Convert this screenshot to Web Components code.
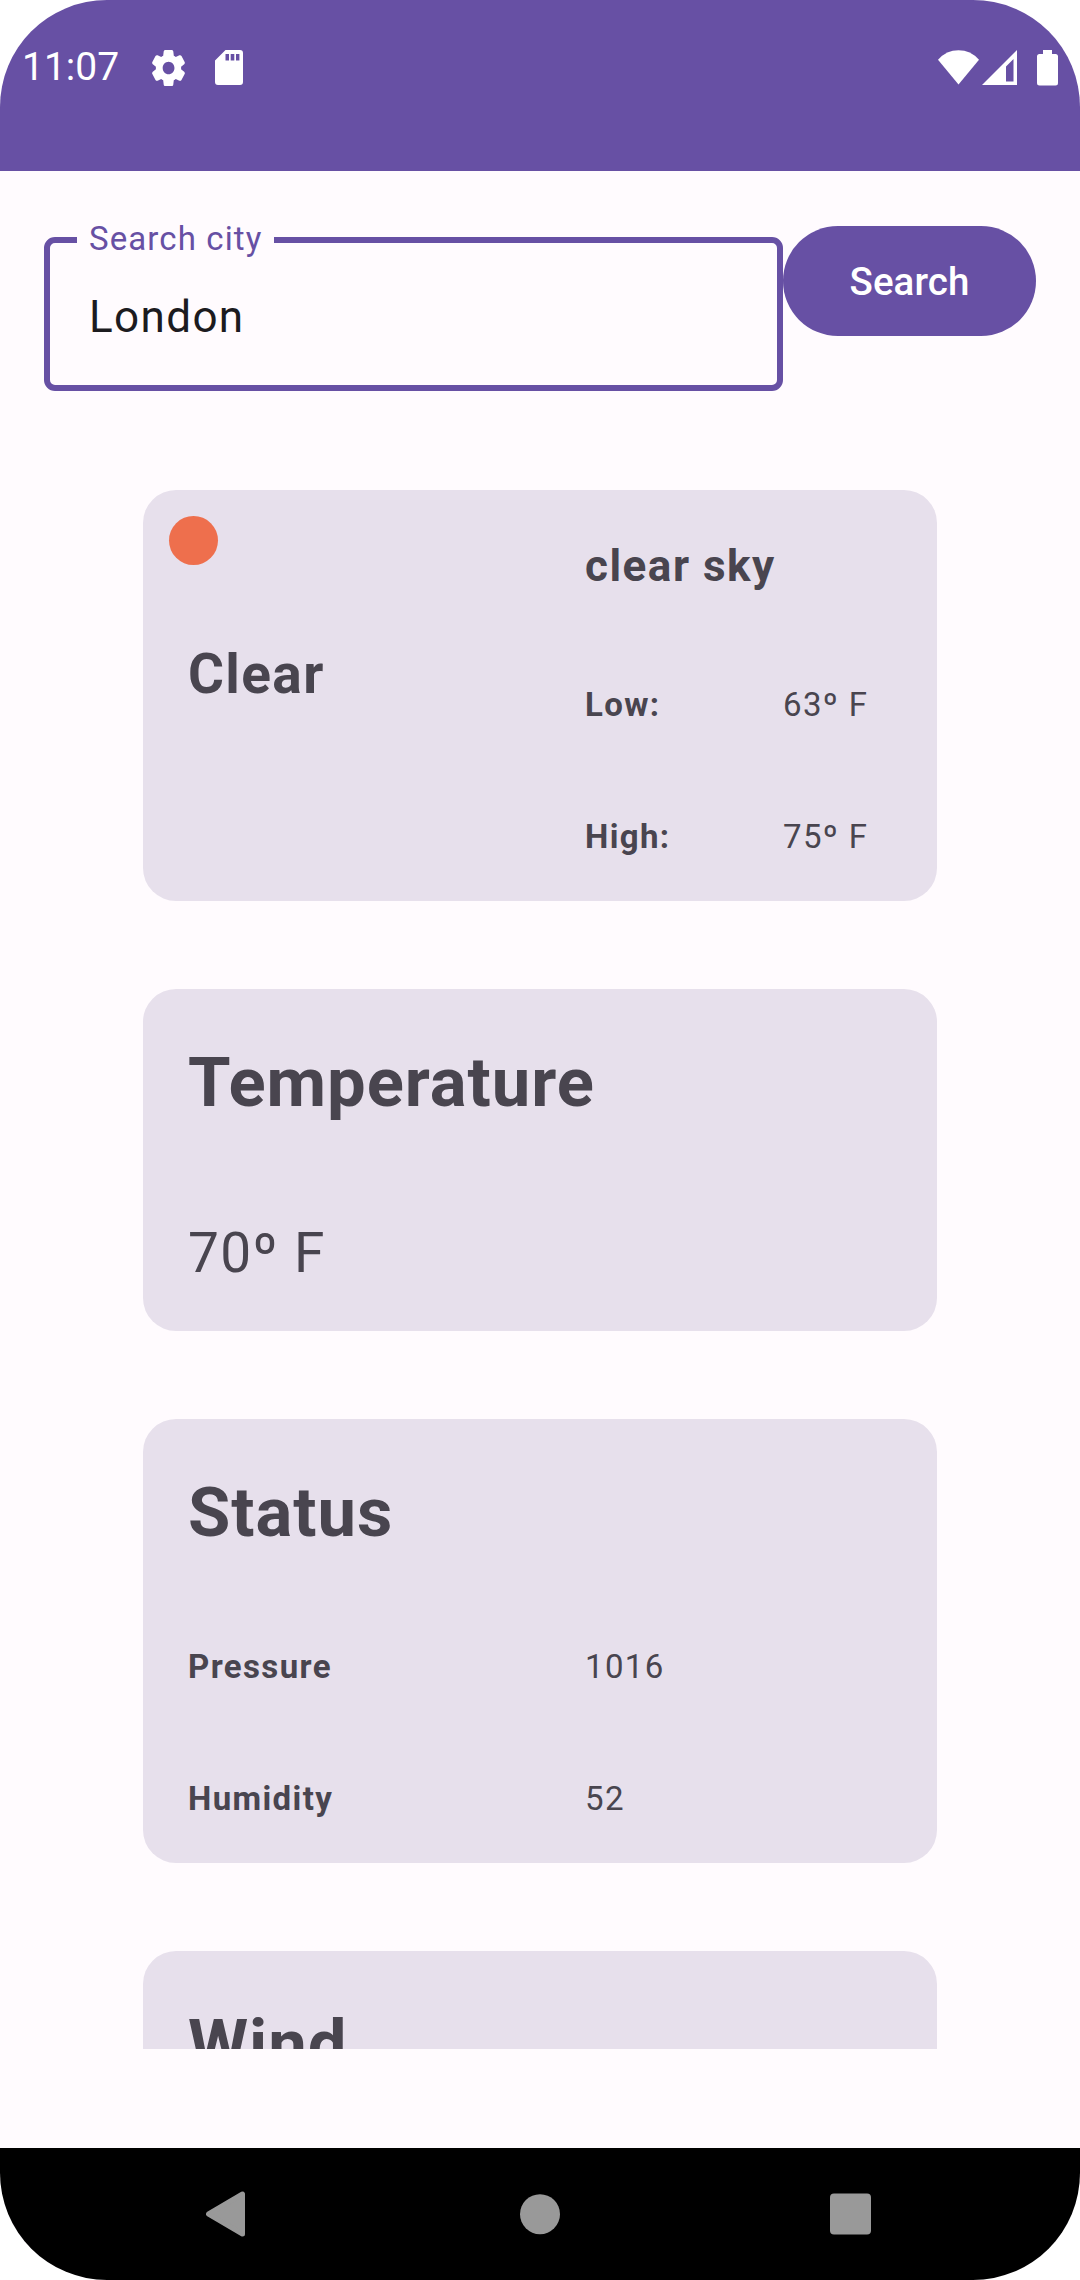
<!DOCTYPE html>
<html lang="en">
<head>
<meta charset="utf-8">
<title>Weather</title>
<style>
html, body { margin: 0; background: #fff; }
body { font-family: Roboto, "Noto Sans", sans-serif; }
</style>
</head>
<body>
<weather-screen>
  <status-bar slot="status">11:07</status-bar>
  <search-row slot="content" label="Search city" action="Search">London</search-row>
  <card-list slot="content">
    <summary-card>
      <text-line size="55" bold slot="main">Clear</text-line>
      <text-line size="44" bold slot="detail" style="letter-spacing:1.5px">clear sky</text-line>
      <value-row slot="detail" split="198"><b slot="name">Low:</b>63º F</value-row>
      <value-row slot="detail" split="198"><b slot="name">High:</b>75º F</value-row>
    </summary-card>
    <info-card style="--h:342px">
      <text-line size="68.75" bold style="letter-spacing:.95px">Temperature</text-line>
      <text-line size="55" style="margin-top:104px">70º F</text-line>
    </info-card>
    <info-card style="--h:444px">
      <text-line size="68.75" bold style="letter-spacing:.95px">Status</text-line>
      <value-row split="397" style="margin-top:88px"><b slot="name">Pressure</b>1016</value-row>
      <value-row split="397" style="margin-top:66px"><b slot="name">Humidity</b>52</value-row>
    </info-card>
    <info-card style="--h:444px">
      <text-line size="68.75" bold style="letter-spacing:.95px">Wind</text-line>
    </info-card>
  </card-list>
  <nav-bar slot="nav"></nav-bar>
</weather-screen>
<script>
const define = (name, html, init) => customElements.define(name, class extends HTMLElement {
  constructor() {
    super();
    this.attachShadow({ mode: 'open' }).innerHTML = html;
  }
  connectedCallback() { if (init) init(this, this.shadowRoot); }
});

define('weather-screen', `
<style>
:host { display: flex; flex-direction: column; width: 1080px; height: 2280px; overflow: hidden;
  border-radius: 107px; background: #fffbfe; color: #49454f; }
header { flex: none; height: 171px; background: #6750a4; }
main { flex: none; height: 1878px; overflow: hidden; display: flex; flex-direction: column; }
footer { margin-top: auto; height: 132px; background: #000; }
</style>
<header><slot name="status"></slot></header>
<main><slot name="content"></slot></main>
<footer><slot name="nav"></slot></footer>`);

define('status-bar', `
<style>
:host { display: flex; justify-content: space-between; height: 135px; color: #fff;
  font-size: 39px; line-height: 135px; padding: 0 22px; box-sizing: border-box; }
div { display: flex; align-items: center; }
.time { width: 130px; }
svg { display: block; fill: #fff; }
</style>
<div>
  <span class="time"><slot></slot></span>
  <svg width="33" height="36" viewBox="2.2 2 19.6 20" preserveAspectRatio="none"><path d="M19.5 12c0-.23-.01-.45-.03-.68l1.86-1.41c.4-.3.51-.86.26-1.3l-1.87-3.23c-.25-.44-.79-.62-1.25-.42l-2.15.91c-.37-.26-.76-.49-1.17-.68l-.29-2.31c-.06-.5-.49-.88-.99-.88h-3.73c-.51 0-.94.38-1 .88l-.29 2.31c-.41.19-.8.42-1.17.68l-2.15-.91c-.46-.2-1-.02-1.25.42L2.41 8.62c-.25.44-.14.99.26 1.3l1.86 1.41C4.51 11.55 4.5 11.77 4.5 12s.01.45.03.68l-1.86 1.41c-.4.3-.51.86-.26 1.3l1.87 3.23c.25.44.79.62 1.25.42l2.15-.91c.37.26.76.49 1.17.68l.29 2.31c.06.5.49.88.99.88h3.73c.5 0 .93-.38.99-.88l.29-2.31c.41-.19.8-.42 1.17-.68l2.15.91c.46.2 1 .02 1.25-.42l1.87-3.23c.25-.44.14-.99-.26-1.3l-1.86-1.41c.03-.23.04-.45.04-.68zM12.04 15.5c-1.93 0-3.5-1.57-3.5-3.5s1.57-3.5 3.5-3.5 3.5 1.57 3.5 3.5-1.57 3.5-3.5 3.5z"/></svg>
  <svg style="margin-left:30px" width="28" height="35" viewBox="0 0 28 35"><path fill-rule="evenodd" d="M10.5 0H25Q28 0 28 3V32Q28 35 25 35H3Q0 35 0 32V10.5ZM10.5 4V10.5H14V4ZM15.7 4V10.5H19.3V4ZM21 4V10.5H24.4V4Z"/></svg>
</div>
<div>
  <svg width="41" height="35" viewBox="0 0 41 35"><path d="M0 9.7Q8.500 .3 20.500 .3T41 9.700L20.500 34.500Z"/></svg>
  <svg style="margin-left:3px" width="35" height="35" viewBox="0 0 35 35"><path fill-rule="evenodd" d="M35 0V35H0ZM31.500 9L24 16.500V31.500H31.500Z"/></svg>
  <svg style="margin-left:20px" width="21" height="36" viewBox="0 0 21 36"><path d="M6 0H15V4H18.500Q21 4 21 6.500V33Q21 35.500 18.500 35.500H2.500Q0 35.500 0 33V6.500Q0 4 2.500 4H6Z"/></svg>
</div>`);

define('search-row', `
<style>
:host { display: flex; align-items: flex-start; padding: 51px 44px 0; height: 268px; flex: none; }
fieldset { box-sizing: border-box; width: 739px; height: 169px; margin: 0; min-width: 0;
  border: 6px solid #6750a4; border-radius: 11px; padding: 0 27px; color: #1c1b1f;
  font-size: 44px; letter-spacing: 1.375px; }
legend { box-sizing: border-box; width: 197px; height: 36px; padding: 0 0 2px 12px; color: #6750a4;
  font-size: 33px; line-height: 34px; letter-spacing: 1.1px; white-space: nowrap; }
.value { padding-left: 12px; margin-top: 26px; line-height: 66px; }
button { flex: 1; height: 110px; margin-top: 4px; border: 0; border-radius: 55px; background: #6750a4;
  color: #fff; font: 500 38.5px/108px Roboto, sans-serif; letter-spacing: .1px; padding: 2px 0 0; }
</style>
<fieldset><legend></legend><div class="value"><slot></slot></div></fieldset>
<button type="button"></button>`, (el, root) => {
  root.querySelector('legend').textContent = el.getAttribute('label');
  root.querySelector('button').textContent = el.getAttribute('action');
});

define('card-list', `
<style>:host { display: flex; flex-direction: column; gap: 88px; flex: none; width: 794px; margin-left: 143px; }</style>
<slot></slot>`);

define('info-card', `
<style>
:host { display: flex; flex-direction: column; box-sizing: border-box; height: var(--h); flex: none;
  background: #e7e0ec; border-radius: 33px; padding: 61px 44px 0 45px; }
</style>
<slot></slot>`);

define('summary-card', `
<style>
:host { display: grid; grid-template-columns: 442px 1fr; height: 411px; flex: none;
  background: #e7e0ec; border-radius: 33px; }
.left { padding: 26px 0 0 26px; }
.dot { width: 49px; height: 49px; border-radius: 50%; background: #ee6f4d; }
.main { padding: 76px 0 0 19px; }
.right { padding-top: 43px; display: flex; flex-direction: column; gap: 66px; }
::slotted(text-line[slot=detail]) { margin-bottom: 7px; }
</style>
<div class="left"><div class="dot"></div><div class="main"><slot name="main"></slot></div></div>
<div class="right"><slot name="detail"></slot></div>`);

define('text-line', `
<style>
:host { display: block; line-height: 66px; letter-spacing: 1.375px; white-space: nowrap; }
:host([bold]) { font-weight: 700; }
</style>
<slot></slot>`, el => { el.style.fontSize = el.getAttribute('size') + 'px'; });

define('value-row', `
<style>
:host { display: grid; font-size: 33px; line-height: 66px; letter-spacing: 1.375px; white-space: nowrap; }
</style>
<slot name="name"></slot><span><slot></slot></span>`, el => {
  el.style.gridTemplateColumns = el.getAttribute('split') + 'px 1fr';
});

define('nav-bar', `
<style>
:host { display: grid; grid-template-columns: 314px 310px 41px; align-items: center; height: 132px; padding-left: 206px; }
svg { display: block; fill: #999; stroke: #999; }
</style>
<svg width="39" height="46" viewBox="0 0 39 46"><path stroke-width="5" stroke-linejoin="round" d="M36.500 3V43L2.500 23Z"/></svg>
<svg width="40" height="41" viewBox="0 0 40 41"><circle cx="20" cy="20.200" r="20" stroke="none"/></svg>
<svg width="41" height="42" viewBox="0 0 41 42"><rect width="41" height="41" y=".5" rx="4" stroke="none"/></svg>`);
</script>
</body>
</html>
